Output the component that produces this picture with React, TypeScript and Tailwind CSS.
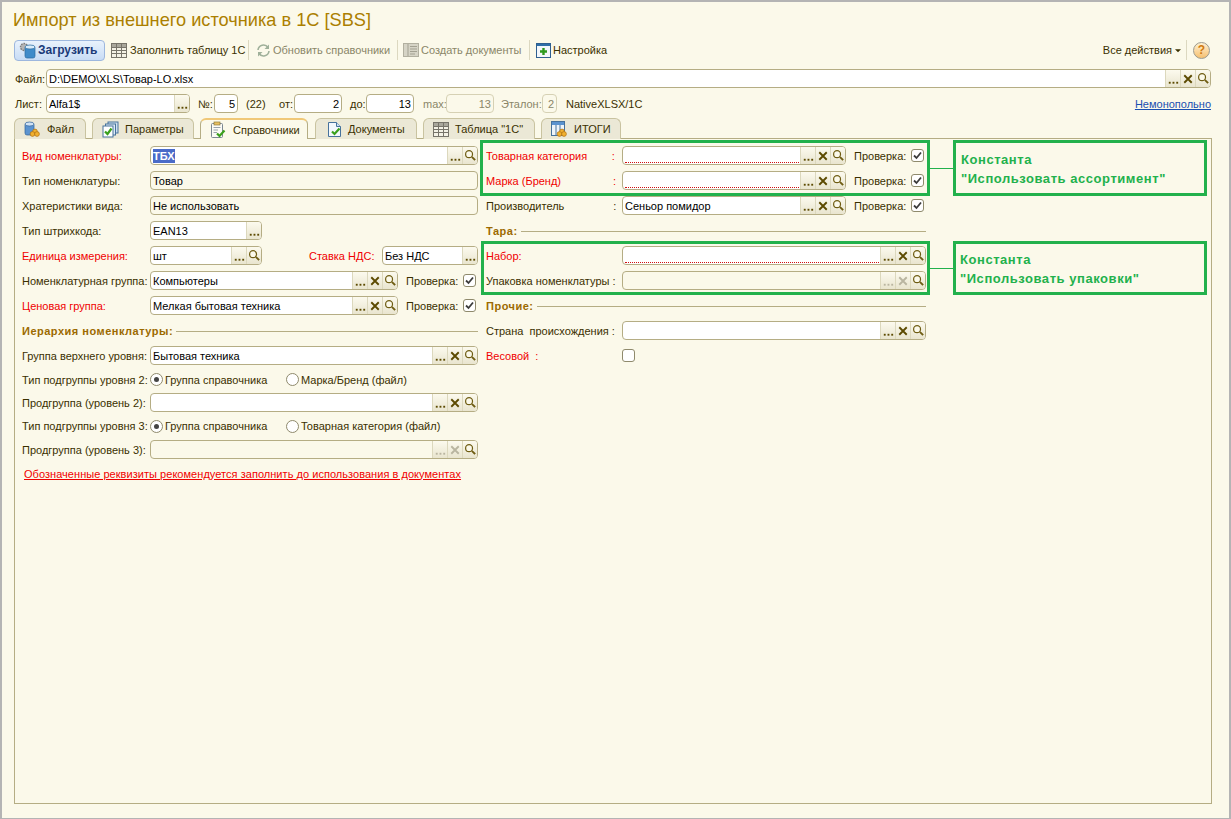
import type { ReactNode } from "react";

type Btn = "dots" | "x" | "search" | "dots-off" | "x-off";

function BtnIcon({ kind }: { kind: Btn }) {
  const off = kind.endsWith("-off");
  const color = off ? "#b9b5a0" : "#5c4a00";
  if (kind === "dots" || kind === "dots-off") {
    return (
      <svg width="15" height="16" viewBox="0 0 15 16">
        <rect x="3" y="11" width="2" height="2" fill={color} />
        <rect x="7" y="11" width="2" height="2" fill={color} />
        <rect x="11" y="11" width="2" height="2" fill={color} />
      </svg>
    );
  }
  if (kind === "x" || kind === "x-off") {
    return (
      <svg width="15" height="16" viewBox="0 0 15 16">
        <path d="M3.5 4 11.5 12M11.5 4 3.5 12" stroke={color} strokeWidth="2" fill="none" />
      </svg>
    );
  }
  return (
    <svg width="15" height="16" viewBox="0 0 15 16">
      <circle cx="6.5" cy="6" r="3.7" stroke="#6e5c12" strokeWidth="1.3" fill="#fbf9ea" />
      <path d="M9.5 9 13 12.5" stroke="#6e5c12" strokeWidth="2" />
    </svg>
  );
}

function Field({
  w,
  value,
  buttons = [],
  selected,
  required,
  disabled,
  muted,
  right,
}: {
  w: string;
  value?: string;
  buttons?: Btn[];
  selected?: boolean;
  required?: boolean;
  disabled?: boolean;
  muted?: boolean;
  right?: boolean;
}) {
  return (
    <div className={`${w} h-[19px] shrink-0 flex border rounded-[4px] overflow-hidden ${muted ? "border-[#d6d1b4]" : "border-[#b5ad84]"} ${disabled ? "bg-[#fbf9ea]" : "bg-white"}`}>
      <div className={`flex-1 min-w-0 px-[2px] flex items-center whitespace-nowrap relative ${muted ? "text-[#8a8668]" : "text-black"} ${right ? "justify-end" : ""}`}>
        {selected ? <span className="bg-[#4a6bc8] text-white font-bold leading-[14px]">{value}</span> : value}
        {required && <div className="absolute left-[2px] right-[1px] bottom-[1px] border-b border-dotted border-[#d01010]" />}
      </div>
      {buttons.map((b, i) => (
        <div key={i} className="w-[15px] shrink-0 flex items-center justify-center border-l border-[#dcd8bd] bg-gradient-to-b from-[#fcfaee] to-[#e9e5cf]">
          <BtnIcon kind={b} />
        </div>
      ))}
    </div>
  );
}

function Check({ checked }: { checked?: boolean }) {
  return (
    <div className="w-[13px] h-[13px] shrink-0 border border-[#8f8a6c] rounded-[3px] bg-white flex items-center justify-center">
      {checked && (
        <svg width="11" height="11" viewBox="0 0 11 11">
          <path d="M2 5.5 4.5 8 9 2.5" stroke="#3c3c3c" strokeWidth="1.8" fill="none" />
        </svg>
      )}
    </div>
  );
}

function Radio({ checked }: { checked?: boolean }) {
  return (
    <div className="w-[13px] h-[13px] shrink-0 border border-[#8f8a6c] rounded-full bg-white flex items-center justify-center">
      {checked && <div className="w-[5px] h-[5px] rounded-full bg-[#444]" />}
    </div>
  );
}

function Heading({ text, w }: { text: string; w: string }) {
  return (
    <div className={`h-[25px] flex items-center gap-[3px] ${w}`}>
      <span className="font-bold text-[#9c6a00] whitespace-nowrap tracking-[0.5px]">{text}</span>
      <div className="flex-1 h-px bg-[#b5ad84] mt-[2px]" />
    </div>
  );
}

function Row({ h = "h-[25px]", label, red, lw, children }: { h?: string; label: string; red?: boolean; lw: string; children: ReactNode }) {
  return (
    <div className={`${h} flex items-center`}>
      <div className={`${lw} shrink-0 whitespace-pre ${red ? "text-[#f00000]" : ""}`}>{label}</div>
      {children}
    </div>
  );
}

function Verify() {
  return (
    <>
      <span className="ml-[8px] w-[57px] shrink-0">Проверка:</span>
      <Check checked />
    </>
  );
}

function Coins() {
  return (
    <>
      <circle cx="11" cy="10.5" r="2.4" fill="#f0b030" stroke="#b07010" strokeWidth=".7" />
      <circle cx="8.5" cy="13" r="2.4" fill="#f0b030" stroke="#b07010" strokeWidth=".7" />
      <circle cx="13" cy="13" r="2.4" fill="#f0b030" stroke="#b07010" strokeWidth=".7" />
    </>
  );
}

function Tick() {
  return <path d="M5 10.5 7.5 13 12.5 7.5" stroke="#3aa01c" strokeWidth="2.2" fill="none" />;
}

function GridIcon() {
  return (
    <svg width="16" height="15" viewBox="0 0 16 15">
      <rect x=".5" y=".5" width="15" height="14" fill="#f4f2e6" stroke="#77746a" />
      <rect x="1" y="1" width="14" height="3" fill="#a9a79c" />
      <path d="M1 4.5H15M1 7.5H15M1 10.5H15M5.5 1V14M10.5 1V14" stroke="#77746a" strokeWidth="1" />
    </svg>
  );
}

const tabIcons: Record<string, ReactNode> = {
  file: (
    <svg width="17" height="17" viewBox="0 0 17 17">
      <rect x="1" y="2" width="9" height="12" rx="2" fill="#5b93cf" stroke="#2f6299" strokeWidth=".7" />
      <ellipse cx="5.5" cy="3" rx="4.5" ry="2" fill="#cfe2f5" stroke="#2f6299" strokeWidth=".7" />
      <Coins />
    </svg>
  ),
  params: (
    <svg width="17" height="17" viewBox="0 0 17 17">
      <rect x="6" y="1" width="10" height="11" fill="#cfe0ef" stroke="#47729c" />
      <rect x="3.5" y="3" width="10" height="11" fill="#dceaf5" stroke="#47729c" />
      <rect x="1" y="5" width="10" height="11" fill="#fff" stroke="#47729c" />
      <path d="M3 10.5 5.5 13 9.5 7.5" stroke="#3aa01c" strokeWidth="2.2" fill="none" />
    </svg>
  ),
  ref: (
    <svg width="17" height="18" viewBox="0 0 17 18">
      <rect x="1.5" y="2.5" width="11" height="14" rx="1" fill="#fbfbf6" stroke="#7b8791" />
      <rect x="4" y="1" width="6" height="3" fill="#e8c060" stroke="#8c7a3c" strokeWidth=".7" />
      <path d="M3.5 6.5H10.5M3.5 9H8M3.5 11.5H7" stroke="#9aa3ab" />
      <path d="M7 12.5 9.5 15 14.5 9.5" stroke="#3aa01c" strokeWidth="2.2" fill="none" />
    </svg>
  ),
  doc: (
    <svg width="15" height="17" viewBox="0 0 15 17">
      <path d="M1.5 1.5H9.5L13.5 5.5V15.5H1.5Z" fill="#f4f8fc" stroke="#47729c" />
      <path d="M9.5 1.5V5.5H13.5" fill="#cfe0ef" stroke="#47729c" />
      <Tick />
    </svg>
  ),
  table: <GridIcon />,
  total: (
    <svg width="17" height="17" viewBox="0 0 17 17">
      <rect x=".5" y=".5" width="13" height="14" fill="#eef4fa" stroke="#47729c" />
      <rect x="1" y="1" width="12" height="3" fill="#5b93cf" />
      <path d="M5 4V14M9 4V14" stroke="#47729c" />
      <Coins />
    </svg>
  ),
};

function Tab({ w, icon, text, active, pl }: { w: string; icon: string; text: string; active?: boolean; pl: string }) {
  return (
    <div
      className={`${w} ${pl} h-[21px] shrink-0 flex items-center gap-[6px] border border-b-0 rounded-t-[6px] whitespace-nowrap relative top-px ${
        active ? "bg-[#fbf9ea] border-[#b5ad84] border-t-2 border-t-[#f0c878] z-10" : "bg-[#ebe8d6] border-[#c9c3a0]"
      }`}
    >
      {tabIcons[icon]}
      <span>{text}</span>
    </div>
  );
}

function Sep() {
  return <div className="w-px h-[20px] bg-[#dcd8c0] shrink-0" />;
}

export default function App() {
  return (
    <div className="w-[1231px] h-[819px] overflow-hidden bg-[#fbf9ea] border-t-2 border-l-2 border-r-2 border-b border-[#b4b4b4] flex flex-col pl-[12px] pr-[18px] text-[11px] leading-[14px] text-[#3a3000] [font-family:'Liberation_Sans',Arial,sans-serif] relative">
      <div className="h-[36px] -ml-[1px] flex items-center text-[18.2px] text-[#ab7f00] whitespace-nowrap">Импорт из внешнего источника в 1С [SBS]</div>

      <div className="h-[22px] mt-[1px] flex items-center whitespace-nowrap">
        <div className="w-[91px] h-[21px] flex items-center gap-[2px] pl-[4px] border border-[#9db7de] rounded-[4px] bg-gradient-to-b from-[#e9f2fc] to-[#c8dcf5] font-bold text-[12px] text-[#1b3a78] shrink-0">
          <svg width="17" height="17" viewBox="0 0 17 17">
            <circle cx="5" cy="5" r="3.5" fill="#b4b4b4" stroke="#7c7c7c" strokeWidth="1.4" strokeDasharray="1.6 1" />
            <rect x="6" y="4" width="10" height="12" rx="2" fill="#3f8bc9" stroke="#2a6a9f" strokeWidth=".7" />
            <ellipse cx="11" cy="5" rx="5" ry="2" fill="#d9ecfa" stroke="#2a6a9f" strokeWidth=".7" />
          </svg>
          Загрузить
        </div>
        <div className="ml-[6px]"><GridIcon /></div>
        <span className="ml-[3px] w-[118px]">Заполнить таблицу 1С</span>
        <Sep />
        <svg className="ml-[7px]" width="15" height="15" viewBox="0 0 15 15">
          <path d="M2 7A5.5 5.5 0 0 1 12 4.5M13 8A5.5 5.5 0 0 1 3 10.5" stroke="#9fb09a" strokeWidth="1.6" fill="none" />
          <path d="M13 1.5V6H8.5ZM2 13.5V9H6.5Z" fill="#9fb09a" />
        </svg>
        <span className="ml-[2px] w-[124px] text-[#8a8668]">Обновить справочники</span>
        <Sep />
        <svg className="ml-[5px]" width="16" height="16" viewBox="0 0 16 16">
          <rect x=".5" y="1.5" width="15" height="13" fill="#d6d4c6" stroke="#b2b0a0" />
          <path d="M5 2V14M7 4.5H14M7 7H14M7 9.5H14M7 12H12" stroke="#a3a192" />
        </svg>
        <span className="ml-[2px] w-[108px] text-[#8a8668]">Создать документы</span>
        <Sep />
        <svg className="ml-[6px]" width="15" height="15" viewBox="0 0 15 15">
          <rect x=".5" y=".5" width="14" height="14" fill="#f3f7fb" stroke="#2f5f8f" />
          <rect x="1" y="1" width="13" height="2" fill="#2f6fa8" />
          <path d="M7.5 5V12M4 8.5H11" stroke="#2e9a1e" strokeWidth="2.4" />
        </svg>
        <span className="ml-[2px]">Настройка</span>
        <span className="ml-auto">Все действия</span>
        <svg className="ml-[3px]" width="6" height="5" viewBox="0 0 7 5"><path d="M0 1H7L3.5 4.5Z" fill="#3a3000" /></svg>
        <div className="ml-[5px]"><Sep /></div>
        <div className="ml-[6px] mr-[1px] w-[17px] h-[17px] rounded-full bg-gradient-to-b from-[#fff0d0] to-[#f5c070] border border-[#9a9a90] flex items-center justify-center font-bold text-[#d07a10] text-[12px]">?</div>
      </div>

      <div className="h-[19px] mt-[8px] flex items-center">
        <span className="w-[32px] pl-[1px] shrink-0">Файл:</span>
        <Field w="w-[1165px]" value="D:\DEMO\XLS\Товар-LO.xlsx" buttons={["dots", "x", "search"]} />
      </div>

      <div className="h-[19px] mt-[6px] flex items-center whitespace-nowrap">
        <span className="w-[32px] pl-[1px] shrink-0">Лист:</span>
        <Field w="w-[144px]" value="Alfa1$" buttons={["dots"]} />
        <span className="ml-[8px] w-[16px]">№:</span>
        <Field w="w-[24px]" value="5" right />
        <span className="ml-[8px] w-[33px]">(22)</span>
        <span className="w-[15px]">от:</span>
        <Field w="w-[48px]" value="2" right />
        <span className="ml-[8px] w-[16px]">до:</span>
        <Field w="w-[48px]" value="13" right />
        <span className="ml-[9px] w-[23px] text-[#8a8668]">max:</span>
        <Field w="w-[48px]" value="13" right disabled muted />
        <span className="ml-[7px] w-[41px] text-[#8a8668]">Эталон:</span>
        <Field w="w-[15px]" value="2" right disabled muted />
        <span className="ml-[9px]">NativeXLSX/1C</span>
        <span className="ml-auto text-[#1a4fb0] underline">Немонопольно</span>
      </div>

      <div className="h-[25px] flex items-end gap-[6px] pt-[4px]">
        <Tab w="w-[72px]" pl="pl-[9px]" icon="file" text="Файл" />
        <Tab w="w-[102px]" pl="pl-[9px]" icon="params" text="Параметры" />
        <Tab w="w-[108px]" pl="pl-[9px]" icon="ref" text="Справочники" active />
        <Tab w="w-[102px] ml-[1px]" pl="pl-[11px]" icon="doc" text="Документы" />
        <Tab w="w-[112px]" pl="pl-[9px]" icon="table" text='Таблица "1С"' />
        <Tab w="w-[80px]" pl="pl-[9px]" icon="total" text="ИТОГИ" />
      </div>

      <div className="w-[1198px] h-[666px] border border-[#b5ad84] flex pt-[4px] pl-[7px]">
        <div className="w-[456px] shrink-0">
          <Row label="Вид номенклатуры:" red lw="w-[128px]">
            <Field w="w-[328px]" value="ТБХ" selected buttons={["dots", "search"]} />
          </Row>
          <Row label="Тип номенклатуры:" lw="w-[128px]"><Field w="w-[328px]" value="Товар" disabled /></Row>
          <Row label="Хратеристики вида:" lw="w-[128px]"><Field w="w-[328px]" value="Не использовать" disabled /></Row>
          <Row label="Тип штрихкода:" lw="w-[128px]"><Field w="w-[112px]" value="EAN13" buttons={["dots"]} /></Row>
          <Row label="Единица измерения:" red lw="w-[128px]">
            <Field w="w-[112px]" value="шт" buttons={["dots", "search"]} />
            <span className="ml-[47px] w-[73px] shrink-0 text-[#f00000]">Ставка НДС:</span>
            <Field w="w-[96px]" value="Без НДС" buttons={["dots"]} />
          </Row>
          <Row label="Номенклатурная группа:" lw="w-[128px]">
            <Field w="w-[248px]" value="Компьютеры" buttons={["dots", "x", "search"]} />
            <Verify />
          </Row>
          <Row label="Ценовая группа:" red lw="w-[128px]">
            <Field w="w-[248px]" value="Мелкая бытовая техника" buttons={["dots", "x", "search"]} />
            <Verify />
          </Row>
          <Heading text="Иерархия номенклатуры:" w="w-[456px]" />
          <Row label="Группа верхнего уровня:" lw="w-[128px]"><Field w="w-[328px]" value="Бытовая техника" buttons={["dots", "x", "search"]} /></Row>
          <Row h="h-[23px]" label="Тип подгруппы уровня 2:" lw="w-[128px]">
            <Radio checked />
            <span className="ml-[2px] w-[121px]">Группа справочника</span>
            <Radio />
            <span className="ml-[2px]">Марка/Бренд (файл)</span>
          </Row>
          <Row h="h-[23px]" label="Продгруппа (уровень 2):" lw="w-[128px]"><Field w="w-[328px]" buttons={["dots", "x", "search"]} /></Row>
          <Row h="h-[24px]" label="Тип подгруппы уровня 3:" lw="w-[128px]">
            <Radio checked />
            <span className="ml-[2px] w-[121px]">Группа справочника</span>
            <Radio />
            <span className="ml-[2px]">Товарная категория (файл)</span>
          </Row>
          <Row h="h-[23px]" label="Продгруппа (уровень 3):" lw="w-[128px]"><Field w="w-[328px]" disabled buttons={["dots-off", "x-off", "search"]} /></Row>
          <div className="h-[25px] flex items-center pl-[2px] text-[#f00000] underline tracking-[0.04px]">Обозначенные реквизиты рекомендуется заполнить до использования в документах</div>
        </div>

        <div className="ml-[8px] w-[440px] shrink-0">
          <Row label="Товарная категория        :" red lw="w-[136px]">
            <Field w="w-[224px]" required buttons={["dots", "x", "search"]} />
            <Verify />
          </Row>
          <Row label="Марка (Бренд)                 :" red lw="w-[136px]">
            <Field w="w-[224px]" required buttons={["dots", "x", "search"]} />
            <Verify />
          </Row>
          <Row label="Производитель                :" lw="w-[136px]">
            <Field w="w-[224px]" value="Сеньор помидор" buttons={["dots", "x", "search"]} />
            <Verify />
          </Row>
          <Heading text="Тара:" w="w-[440px]" />
          <Row label="Набор:" red lw="w-[136px]"><Field w="w-[304px]" required buttons={["dots", "x", "search"]} /></Row>
          <Row label="Упаковка номенклатуры :" lw="w-[136px]"><Field w="w-[304px]" disabled buttons={["dots-off", "x-off", "search"]} /></Row>
          <Heading text="Прочие:" w="w-[440px]" />
          <Row label="Страна  происхождения :" lw="w-[136px]"><Field w="w-[304px]" buttons={["dots", "x", "search"]} /></Row>
          <Row label="Весовой  :" red lw="w-[136px]"><Check /></Row>
        </div>
      </div>

      {/* green annotations drawn over the form */}
      <div className="absolute left-[478px] top-[138px] w-[450px] h-[56px] border-[3px] border-[#22b14c]" />
      <div className="absolute left-[928px] top-[166px] w-[23px] h-px bg-[#22b14c]" />
      <div className="absolute left-[951px] top-[138px] w-[254px] h-[56px] border-[3px] border-[#22b14c] pl-[5px] pt-[7px] font-bold text-[13px] tracking-[0.55px] leading-[19px] text-[#22b14c] whitespace-pre">
        {'Константа\n"Использовать ассортимент"'}
      </div>
      <div className="absolute left-[479px] top-[239px] w-[449px] h-[54px] border-[3px] border-[#22b14c]" />
      <div className="absolute left-[928px] top-[266px] w-[23px] h-px bg-[#22b14c]" />
      <div className="absolute left-[951px] top-[239px] w-[254px] h-[54px] border-[3px] border-[#22b14c] pl-[4px] pt-[6px] font-bold text-[13px] tracking-[0.55px] leading-[19px] text-[#22b14c] whitespace-pre">
        {'Константа\n"Использовать упаковки"'}
      </div>
    </div>
  );
}
